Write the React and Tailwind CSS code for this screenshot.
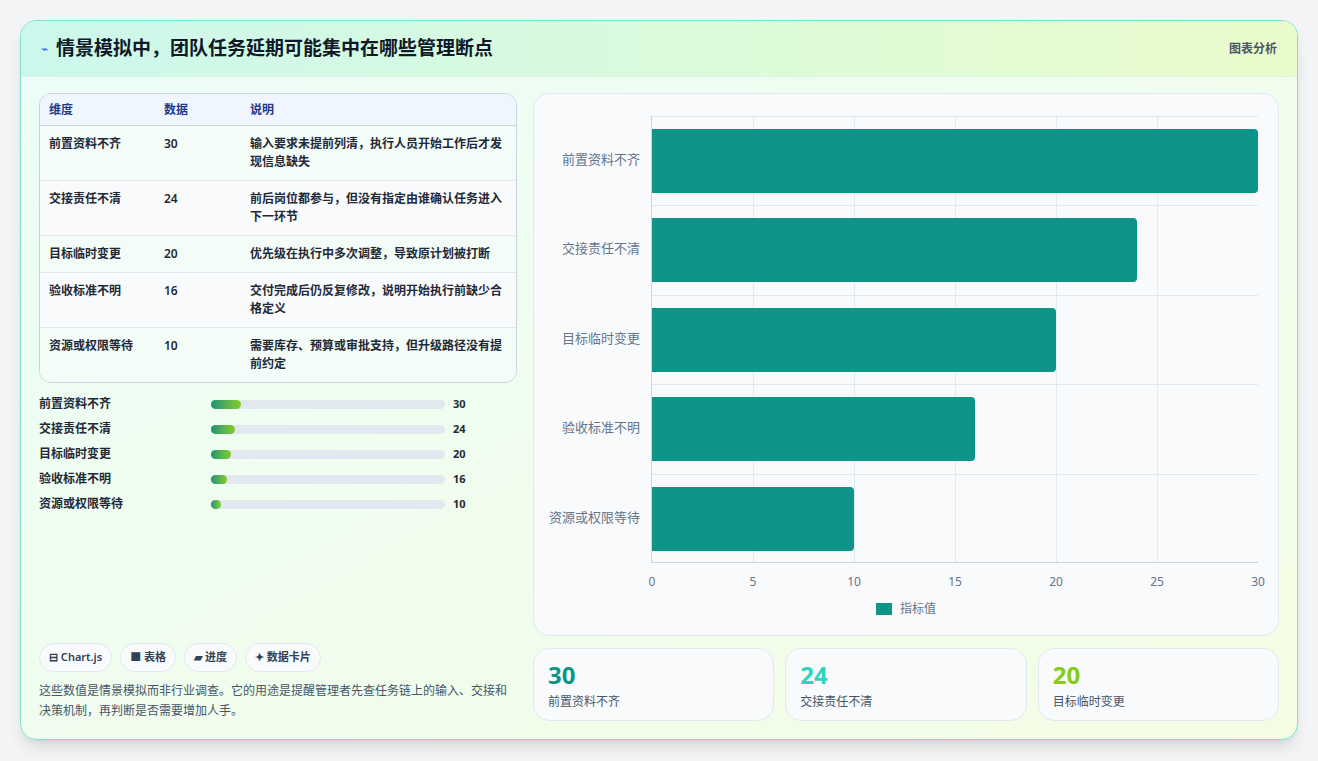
const rows = [
  ["前置资料不齐", 30, "输入要求未提前列清，执行人员开始工作后才发现信息缺失"],
  ["交接责任不清", 24, "前后岗位都参与，但没有指定由谁确认任务进入下一环节"],
  ["目标临时变更", 20, "优先级在执行中多次调整，导致原计划被打断"],
  ["验收标准不明", 16, "交付完成后仍反复修改，说明开始执行前缺少合格定义"],
  ["资源或权限等待", 10, "需要库存、预算或审批支持，但升级路径没有提前约定"],
];

const font = { fontFamily: '"Noto Sans", "Noto Sans CJK SC", sans-serif' };

const Chart = () => (
  <div className="flex-1 rounded-2xl border border-[#e2e8f0] bg-[#f8fafc] relative">
    <div className="absolute left-[117px] top-[22px] w-[607px] h-[447px] border-l border-b border-[#cbd5e1]">
      {[1, 2, 3, 4, 5].map((i) => (
        <div key={i} className="absolute top-0 bottom-0 w-px bg-[#e2e8f0]" style={{ left: `${(i / 6) * 100}%` }} />
      ))}
      {[0, 1, 2, 3, 4].map((i) => (
        <div key={i} className="absolute left-0 right-0 h-px bg-[#e2e8f0]" style={{ top: `${i * 89.4}px` }} />
      ))}
      {rows.map(([n, v], i) => (
        <div key={n}>
          <div className="absolute right-[618px] text-[13px] text-[#64748b] whitespace-nowrap" style={{ top: `${i * 89.4 + 34}px` }}>{n}</div>
          <div className="absolute left-0 h-[64px] bg-[#0e9488] rounded-r-sm" style={{ top: `${i * 89.4 + 13}px`, width: `${(v / 30) * 100}%` }} />
        </div>
      ))}
      {[0, 5, 10, 15, 20, 25, 30].map((t) => (
        <div key={t} className="absolute top-[457px] -translate-x-1/2 text-[12px] text-[#64748b]" style={{ left: `${(t / 30) * 100}%` }}>{t}</div>
      ))}
    </div>
    <div className="absolute left-0 right-0 top-[506px] flex items-center justify-center gap-2 text-[12px] text-[#64748b]">
      <span className="w-4 h-3 bg-[#0e9488]" />指标值
    </div>
  </div>
);

export default function App() {
  return (
    <div className="w-[1318px] h-[761px] bg-[#f3f4f6] pt-5 pl-5" style={font}>
      <div className="w-[1278px] h-[720px] rounded-2xl border border-[#7ee0cf] overflow-hidden flex flex-col bg-gradient-to-br from-[#ecfdf8] to-[#f4fde4] shadow-lg">
        <div className="h-[56px] flex items-center justify-between px-5 bg-gradient-to-r from-[#cbf8ec] to-[#eafccb] border-b border-[#d9f2e6]">
          <div className="flex items-center gap-2">
            <span className="text-[#2563eb] text-[12px]">⌁</span>
            <h1 className="text-[19px] font-bold text-[#111827]">情景模拟中，团队任务延期可能集中在哪些管理断点</h1>
          </div>
          <span className="text-[12px] font-semibold text-[#4b5563]">图表分析</span>
        </div>
        <div className="flex-1 flex gap-4 px-[18px] pt-4 pb-[18px]">
          <div className="w-[478px] flex flex-col">
            <div className="rounded-xl border border-[#cbd5e1] overflow-hidden text-[12px] text-[#1f2937]">
              <div className="flex h-8 items-center bg-[#eff6ff] text-[#1e3a8a] font-semibold border-b border-[#cbd5e1]">
                <div className="w-[124px] pl-[9px]">维度</div>
                <div className="w-[86px]">数据</div>
                <div>说明</div>
              </div>
              {rows.map(([n, v, d], i) => (
                <div key={n} className={`flex py-[9px] leading-[18px] font-semibold ${i % 2 ? "bg-[#f8fafc]" : "bg-[#f3fcf6]"} ${i < 4 ? "border-b border-[#e2e8f0]" : ""}`}>
                  <div className="w-[124px] pl-[9px] shrink-0">{n}</div>
                  <div className="w-[86px] shrink-0">{v}</div>
                  <div className="pr-3">{d}</div>
                </div>
              ))}
            </div>
            <div className="mt-3 flex flex-col gap-[7px]">
              {rows.map(([n, v]) => (
                <div key={n} className="flex items-center h-[18px] text-[12px] font-semibold text-[#1f2937]">
                  <div className="w-[172px]">{n}</div>
                  <div className="w-[234px] h-[9px] rounded-full bg-[#e2e8f0]">
                    <div className="h-full rounded-full bg-gradient-to-r from-[#10946f] to-[#84cc16]" style={{ width: `${v}px` }} />
                  </div>
                  <div className="ml-2 text-[11px] font-bold">{v}</div>
                </div>
              ))}
            </div>
            <div className="mt-auto flex gap-2 text-[11px] font-semibold text-[#334155]">
              {["⊟ Chart.js", "■ 表格", "▰ 进度", "✦ 数据卡片"].map((b) => (
                <span key={b} className="h-[29px] px-[9px] flex items-center rounded-full border border-[#e2e8f0] bg-[#f8fafc]">{b}</span>
              ))}
            </div>
            <p className="mt-[9px] text-[12px] leading-[20px] text-[#475569]">这些数值是情景模拟而非行业调查。它的用途是提醒管理者先查任务链上的输入、交接和决策机制，再判断是否需要增加人手。</p>
          </div>
          <div className="flex-1 flex flex-col gap-3">
            <Chart />
            <div className="h-[73px] grid grid-cols-3 gap-[11px]">
              {[["30", "前置资料不齐", "text-[#0e9488]"], ["24", "交接责任不清", "text-[#2dd4bf]"], ["20", "目标临时变更", "text-[#84cc16]"]].map(([v, n, c]) => (
                <div key={n} className="rounded-2xl border border-[#e2e8f0] bg-[#f8fafc] px-[14px] pt-[10px]">
                  <div className={`text-[24px] font-bold leading-[32px] ${c}`}>{v}</div>
                  <div className="text-[12px] text-[#475569] mt-[2px]">{n}</div>
                </div>
              ))}
            </div>
          </div>
        </div>
      </div>
    </div>
  );
}
